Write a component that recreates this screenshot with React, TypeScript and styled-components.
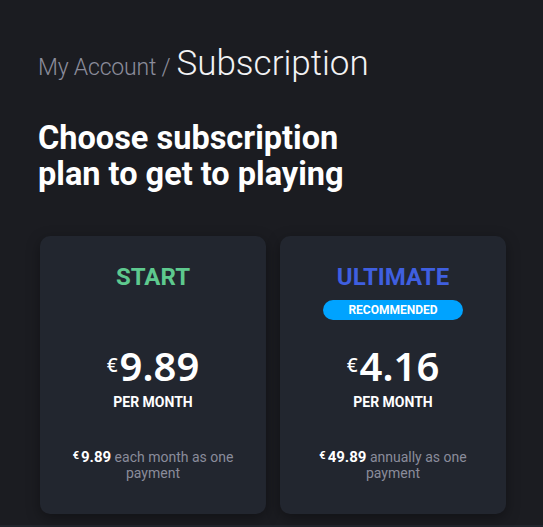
import React from "react";
import styled, { createGlobalStyle } from "styled-components";

const Global = createGlobalStyle`
  html, body { margin: 0; padding: 0; background: #1b1c21; }
  body { font-family: Roboto, "Liberation Sans", sans-serif; -webkit-font-smoothing: antialiased; }
  * { box-sizing: border-box; }
`;

const Page = styled.div`
  padding: 0 0 11px 38px;
  display: flex;
  flex-direction: column;
`;

const Breadcrumb = styled.div`
  display: flex;
  align-items: baseline;
  gap: 6px;
  margin-top: 44px;
  line-height: 40px;
`;

const Crumb = styled.span`
  font-size: 23px;
  font-weight: 300;
  color: #8b8c9b;
  letter-spacing: -0.2px;
`;

const Current = styled.span`
  font-size: 35px;
  font-weight: 300;
  color: #f2f2f4;
`;

const Heading = styled.h1`
  margin: 32px 0 0;
  font-size: 32.5px;
  line-height: 36px;
  font-weight: 700;
  color: #ffffff;
  max-width: 340px;
`;

const Plans = styled.div`
  display: grid;
  grid-template-columns: 226px 226px;
  gap: 14px;
  margin: 44px 0 0 2px;
`;

const Card = styled.div`
  background: #22262f;
  border-radius: 10px;
  box-shadow: 0 4px 14px rgba(0, 0, 0, 0.35);
  padding: 27px 24px 33px;
  display: flex;
  flex-direction: column;
  align-items: center;
  text-align: center;
`;

const PlanName = styled.div<{ $color: string }>`
  font-size: 24px;
  line-height: 28px;
  font-weight: 700;
  color: ${(p) => p.$color};
`;

const BadgeSlot = styled.div`
  height: 20px;
  margin-top: 9px;
  display: flex;
  justify-content: center;
`;

const Badge = styled.span`
  width: 140px;
  height: 20px;
  border-radius: 10px;
  background: #00a3ff;
  color: #ffffff;
  font-size: 12px;
  font-weight: 700;
  line-height: 20px;
  text-align: center;
`;

const Price = styled.div`
  margin-top: 26px;
  display: flex;
  align-items: flex-start;
  font-family: "Noto Sans", "Open Sans", sans-serif;
  color: #ffffff;
  line-height: 40px;
`;

const Currency = styled.span`
  font-size: 19px;
  line-height: 19px;
  margin-top: 10px;
  margin-right: 2px;
  font-weight: 500;
`;

const Amount = styled.span`
  font-size: 40px;
  font-weight: 600;
`;

const Period = styled.div`
  margin-top: 8px;
  font-size: 14px;
  line-height: 16px;
  font-weight: 700;
  color: #ffffff;
`;

const Note = styled.div`
  margin-top: 39px;
  font-size: 14px;
  line-height: 16px;
  color: #8a8c9b;
`;

const NoteCur = styled.sup`
  font-size: 11px;
  line-height: 0;
  font-weight: 700;
  color: #ffffff;
  vertical-align: 3px;
  margin-right: 2px;
`;

const NoteAmount = styled.b`
  font-weight: 700;
  font-size: 15px;
  line-height: 0;
  color: #ffffff;
`;

const Footer = styled.div`
  height: 40px;
  background: #21252c;
`;

type Plan = {
  name: string;
  color: string;
  recommended?: boolean;
  price: string;
  total: string;
  note: string;
};

const plans: Plan[] = [
  { name: "START", color: "#5ec98e", price: "9.89", total: "9.89", note: "each month as one payment" },
  { name: "ULTIMATE", color: "#3f5fe0", recommended: true, price: "4.16", total: "49.89", note: "annually as one payment" },
];

export default function App() {
  return (
    <>
      <Global />
      <Page>
        <Breadcrumb>
          <Crumb>My Account /</Crumb>
          <Current>Subscription</Current>
        </Breadcrumb>
        <Heading>Choose subscription plan to get to playing</Heading>
        <Plans>
          {plans.map((p) => (
            <Card key={p.name}>
              <PlanName $color={p.color}>{p.name}</PlanName>
              <BadgeSlot>{p.recommended && <Badge>RECOMMENDED</Badge>}</BadgeSlot>
              <Price>
                <Currency>€</Currency>
                <Amount>{p.price}</Amount>
              </Price>
              <Period>PER MONTH</Period>
              <Note>
                <NoteCur>€</NoteCur>
                <NoteAmount>{p.total}</NoteAmount> {p.note}
              </Note>
            </Card>
          ))}
        </Plans>
      </Page>
      <Footer />
    </>
  );
}
